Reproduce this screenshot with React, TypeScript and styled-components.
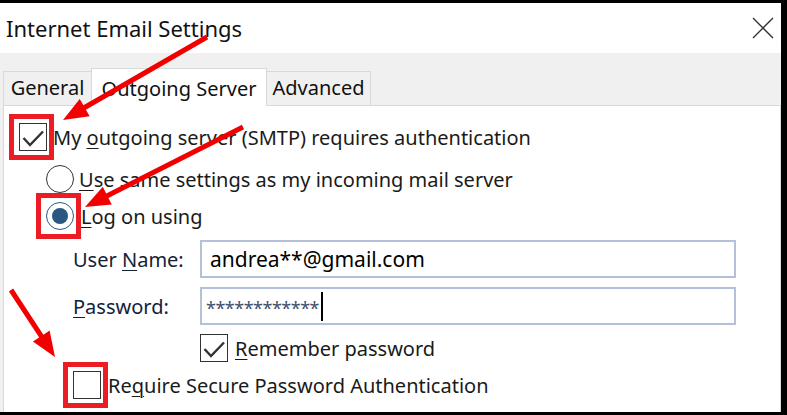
import React from "react";
import styled, { createGlobalStyle } from "styled-components";

const Global = createGlobalStyle`
  html, body { margin: 0; padding: 0; background: #000; }
  body { width: 787px; height: 415px; overflow: hidden; }
`;

const Frame = styled.div`
  position: relative;
  width: 787px;
  height: 415px;
  box-sizing: border-box;
  background: #000;
  padding: 3px 6px 3px 0;
  display: flex;
  font-family: "Noto Sans", "Open Sans", sans-serif;
  color: #1a1a1a;
`;

const Window = styled.div`
  flex: 1;
  display: flex;
  flex-direction: column;
  background: #fff;
  overflow: hidden;
`;

const TitleBar = styled.div`
  height: 50px;
  flex: none;
  display: flex;
  align-items: center;
  justify-content: space-between;
  padding: 0 7px 0 6px;
`;

const Title = styled.h1`
  margin: 0;
  font-size: 22px;
  font-weight: 400;
  color: #111;
`;

const CloseIcon = styled.svg`
  width: 22px;
  height: 22px;
  stroke: #333;
  stroke-width: 1.4;
`;

const Body = styled.div`
  flex: 1;
  display: flex;
  flex-direction: column;
  background: #f0f0f0;
  padding: 15px 0 0 3px;
`;

const TabStrip = styled.div`
  display: flex;
  align-items: flex-end;
  height: 37px;
  flex: none;
`;

const Tab = styled.div<{ $active?: boolean; $w: number }>`
  box-sizing: border-box;
  width: ${(p) => p.$w}px;
  height: ${(p) => (p.$active ? 38 : 34)}px;
  margin-bottom: ${(p) => (p.$active ? -1 : 0)}px;
  margin-left: -1px;
  &:first-child { margin-left: 0; }
  border: 1px solid #d9d9d9;
  border-bottom: none;
  background: ${(p) => (p.$active ? "#fff" : "#f0f0f0")};
  position: relative;
  z-index: ${(p) => (p.$active ? 1 : 0)};
  display: flex;
  align-items: flex-end;
  justify-content: center;
  padding-bottom: 4px;
  font-size: 20px;
  color: #111;
`;

const Panel = styled.div`
  flex: 1;
  background: #fff;
  border: 1px solid #d9d9d9;
  border-bottom: none;
  padding: 17px 0 0 15px;
  display: flex;
  flex-direction: column;
`;

const Row = styled.div<{ $gap: number }>`
  display: flex;
  align-items: center;
  gap: ${(p) => p.$gap}px;
  height: 28px;
  font-size: 20px;
  white-space: nowrap;
`;

const Options = styled.div`
  display: flex;
  flex-direction: column;
  gap: 9px;
  margin: 14px 0 0 27px;
`;

const Form = styled.div`
  display: grid;
  grid-template-columns: 127px 536px;
  grid-template-rows: 38px 38px 28px 28px;
  row-gap: 9px;
  margin: 10px 0 0 54px;
  align-items: center;
  font-size: 20px;
`;

const Label = styled.label`
  font-size: 20px;
  color: #14213a;
`;

const Input = styled.div`
  box-sizing: border-box;
  height: 38px;
  border: 2px solid #b3c2d8;
  background: #fff;
  display: flex;
  align-items: center;
  padding-left: 8px;
  font-size: 21px;
  color: #000;
`;

const Stars = styled.span`
  font-size: 18px;
  color: #3f4f6e;
  letter-spacing: -0.5px;
  padding-top: 4px;
  margin-left: -4px;
`;

const Caret = styled.span`
  display: inline-block;
  width: 2px;
  height: 29px;
  background: #000;
  margin-left: 2px;
`;

const Wide = styled.div<{ $col: string }>`
  grid-column: ${(p) => p.$col};
`;

const Key = styled.u`
  text-underline-offset: 3px;
  text-decoration-thickness: 1px;
`;

const Box = styled.span`
  box-sizing: border-box;
  flex: none;
  width: 28px;
  height: 28px;
  border: 1.5px solid #333;
  background: #fff;
  display: inline-flex;
  align-items: center;
  justify-content: center;
`;

const Radio = styled.span<{ $on?: boolean }>`
  box-sizing: border-box;
  flex: none;
  width: 28px;
  height: 28px;
  border-radius: 50%;
  border: 1.5px solid ${(p) => (p.$on ? "#2b5a82" : "#333")};
  background: #fff;
  display: inline-flex;
  align-items: center;
  justify-content: center;
  &::after {
    content: "";
    display: ${(p) => (p.$on ? "block" : "none")};
    width: 16px;
    height: 16px;
    border-radius: 50%;
    background: #2a5881;
  }
`;

const Highlight = styled.span`
  display: inline-flex;
  flex: none;
  margin: -9px -7px -9px -10px;
  padding: 4px 2px 4px 5px;
  border: 5px solid #ec1c24;
`;

const Overlay = styled.svg`
  position: absolute;
  left: 0;
  top: 0;
  width: 787px;
  height: 415px;
  pointer-events: none;
  z-index: 10;
`;

function Check() {
  return (
    <svg width="25" height="25" viewBox="0 0 25 25" fill="none" stroke="#333" strokeWidth="2.4">
      <path d="M2.5 13 L9 20 L22 6.5" />
    </svg>
  );
}

function arrow(x1: number, y1: number, x2: number, y2: number) {
  const shaft = 5, headLen = 25, headHalf = 10;
  const dx = x2 - x1, dy = y2 - y1;
  const len = Math.hypot(dx, dy);
  const ux = dx / len, uy = dy / len;
  const nx = -uy, ny = ux;
  const bx = x2 - ux * headLen, by = y2 - uy * headLen;
  const s = shaft / 2;
  const pts = [
    [x1 + nx * s, y1 + ny * s],
    [bx + nx * s, by + ny * s],
    [bx + nx * headHalf, by + ny * headHalf],
    [x2, y2],
    [bx - nx * headHalf, by - ny * headHalf],
    [bx - nx * s, by - ny * s],
    [x1 - nx * s, y1 - ny * s],
  ];
  return pts.map((p) => p.map((v) => v.toFixed(1)).join(",")).join(" ");
}

export default function App() {
  return (
    <>
      <Global />
      <Frame>
        <Window>
          <TitleBar>
            <Title>Internet Email Settings</Title>
            <CloseIcon viewBox="0 0 22 22">
              <path d="M1 1 L21 21 M21 1 L1 21" />
            </CloseIcon>
          </TitleBar>
          <Body>
            <TabStrip>
              <Tab $w={89}>General</Tab>
              <Tab $w={176} $active>Outgoing Server</Tab>
              <Tab $w={105}>Advanced</Tab>
            </TabStrip>
            <Panel>
              <Row $gap={6}>
                <Highlight>
                  <Box><Check /></Box>
                </Highlight>
                <span>My <Key>o</Key>utgoing server (SMTP) requires authentication</span>
              </Row>
              <Options>
                <Row $gap={5}>
                  <Radio />
                  <span><Key>U</Key>se same settings as my incoming mail server</span>
                </Row>
                <Row $gap={7}>
                  <Highlight>
                    <Radio $on />
                  </Highlight>
                  <span><Key>L</Key>og on using</span>
                </Row>
              </Options>
              <Form>
                <Label>User <Key>N</Key>ame:</Label>
                <Input>andrea**@gmail.com</Input>
                <Label><Key>P</Key>assword:</Label>
                <Input>
                  <Stars>************</Stars>
                  <Caret />
                </Input>
                <Wide $col="2">
                  <Row $gap={7}>
                    <Box><Check /></Box>
                    <span><Key>R</Key>emember password</span>
                  </Row>
                </Wide>
                <Wide $col="1 / span 2">
                  <Row $gap={7}>
                    <Highlight>
                      <Box />
                    </Highlight>
                    <span>Re<Key>q</Key>uire Secure Password Authentication</span>
                  </Row>
                </Wide>
              </Form>
            </Panel>
          </Body>
        </Window>
        <Overlay viewBox="0 0 787 415">
          <polygon points={arrow(207, 37, 63, 120)} fill="#f20000" />
          <polygon points={arrow(243, 127, 85, 207)} fill="#f20000" />
          <polygon points={arrow(11, 290, 55, 357)} fill="#f20000" />
        </Overlay>
      </Frame>
    </>
  );
}
